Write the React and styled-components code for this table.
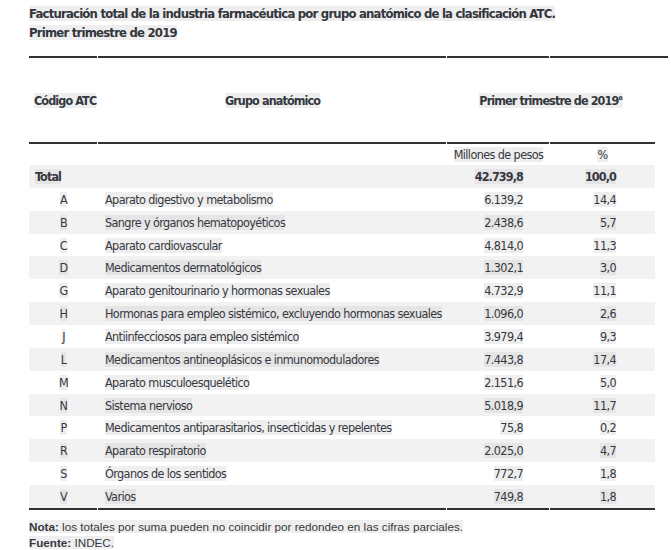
import React from 'react';
import styled, { createGlobalStyle } from 'styled-components';

const GlobalStyle = createGlobalStyle`
  body {
    margin: 0;
    background: #ffffff;
    font-family: "DejaVu Sans Condensed", "Liberation Sans", sans-serif;
    color: #35383f;
  }
`;

const COLS = [69, 349, 103, 105];

const Page = styled.div`
  width: 671px;
  height: 550px;
  padding: 4px 0 0 29px;
  box-sizing: border-box;
  overflow: hidden;
`;

const Title = styled.h1`
  margin: 0;
  font-size: 13px;
  font-weight: 700;
  line-height: 19px;
  letter-spacing: -0.8px;
  color: #33363d;
  white-space: nowrap;
`;

const Mark = styled.span`
  background: ${props => (props.$shaded ? 'rgba(0, 0, 0, 0.05)' : 'rgba(0, 0, 0, 0.065)')};
`;

const Sup = styled.sup`
  font-size: 7px;
  letter-spacing: 0;
`;

const Rule = styled.div`
  display: flex;
  gap: 1px;
  height: 2px;
  margin-top: ${props => props.$top || 0}px;
`;

const Segment = styled.div`
  height: 2px;
  width: ${props => props.$w}px;
  background: #2f3136;
`;

const Row = styled.div`
  display: grid;
  grid-template-columns: ${COLS.map(c => c + 'px').join(' ')};
  width: 626px;
  height: ${props => props.$h || 22.87}px;
  align-items: center;
  font-size: 12.5px;
  letter-spacing: ${props => (props.$bold ? -0.9 : -0.6)}px;
  background: ${props => (props.$shaded ? '#f2f2f2' : 'transparent')};
  font-weight: ${props => (props.$bold ? 700 : 400)};
`;

const Cell = styled.div`
  white-space: nowrap;
  text-align: ${props => props.$align || 'left'};
  padding-left: ${props => props.$pl || 0}px;
  padding-right: ${props => props.$pr || 0}px;
  grid-column: ${props => props.$span || 'auto'};
`;

const Footer = styled.div`
  margin-top: 9px;
  font-family: "Liberation Sans", Arial, sans-serif;
  font-size: 11.7px;
  line-height: 16px;
  color: #35383f;

  b {
    font-weight: 700;
  }
`;

const rows = [
  ['A', 'Aparato digestivo y metabolismo', '6.139,2', '14,4'],
  ['B', 'Sangre y órganos hematopoyéticos', '2.438,6', '5,7'],
  ['C', 'Aparato cardiovascular', '4.814,0', '11,3'],
  ['D', 'Medicamentos dermatológicos', '1.302,1', '3,0'],
  ['G', 'Aparato genitourinario y hormonas sexuales', '4.732,9', '11,1'],
  ['H', 'Hormonas para empleo sistémico, excluyendo hormonas sexuales', '1.096,0', '2,6'],
  ['J', 'Antiinfecciosos para empleo sistémico', '3.979,4', '9,3'],
  ['L', 'Medicamentos antineoplásicos e inmunomoduladores', '7.443,8', '17,4'],
  ['M', 'Aparato musculoesquelético', '2.151,6', '5,0'],
  ['N', 'Sistema nervioso', '5.018,9', '11,7'],
  ['P', 'Medicamentos antiparasitarios, insecticidas y repelentes', '75,8', '0,2'],
  ['R', 'Aparato respiratorio', '2.025,0', '4,7'],
  ['S', 'Órganos de los sentidos', '772,7', '1,8'],
  ['V', 'Varios', '749,8', '1,8'],
];

const TableRule = ({ top, last = COLS[3] }) => (
  <Rule $top={top}>
    <Segment $w={COLS[0] - 1} />
    <Segment $w={COLS[1] - 1} />
    <Segment $w={COLS[2] - 1} />
    <Segment $w={last} />
  </Rule>
);

export default function App() {
  return (
    <Page>
      <GlobalStyle />
      <Title>
        <Mark>Facturación total de la industria farmacéutica por grupo anatómico de la clasificación ATC.</Mark>
        <br />
        <Mark>Primer trimestre de 2019</Mark>
      </Title>

      <TableRule top={14} last={118} />

      <Row $h={84} $bold>
        <Cell $pl={5}><Mark>Código ATC</Mark></Cell>
        <Cell $align="center"><Mark>Grupo anatómico</Mark></Cell>
        <Cell $align="center" $span="3 / 5">
          <Mark>Primer trimestre de 2019<Sup>e</Sup></Mark>
        </Cell>
      </Row>

      <TableRule />

      <Row $h={21}>
        <Cell />
        <Cell />
        <Cell $align="center"><Mark>Millones de pesos</Mark></Cell>
        <Cell $align="center"><Mark>%</Mark></Cell>
      </Row>

      <Row $shaded $bold>
        <Cell $pl={6}><Mark $shaded>Total</Mark></Cell>
        <Cell />
        <Cell $align="right" $pr={27}><Mark $shaded>42.739,8</Mark></Cell>
        <Cell $align="right" $pr={39}><Mark $shaded>100,0</Mark></Cell>
      </Row>

      {rows.map(([code, name, value, pct], i) => {
        const shaded = i % 2 === 1;
        return (
          <Row key={code} $shaded={shaded}>
            <Cell $align="center"><Mark $shaded={shaded}>{code}</Mark></Cell>
            <Cell $pl={7}><Mark $shaded={shaded}>{name}</Mark></Cell>
            <Cell $align="right" $pr={27}><Mark $shaded={shaded}>{value}</Mark></Cell>
            <Cell $align="right" $pr={39}><Mark $shaded={shaded}>{pct}</Mark></Cell>
          </Row>
        );
      })}

      <TableRule />

      <Footer>
        <Mark><b>Nota:</b> los totales por suma pueden no coincidir por redondeo en las cifras parciales.</Mark>
        <br />
        <Mark><b>Fuente:</b> INDEC.</Mark>
      </Footer>
    </Page>
  );
}
